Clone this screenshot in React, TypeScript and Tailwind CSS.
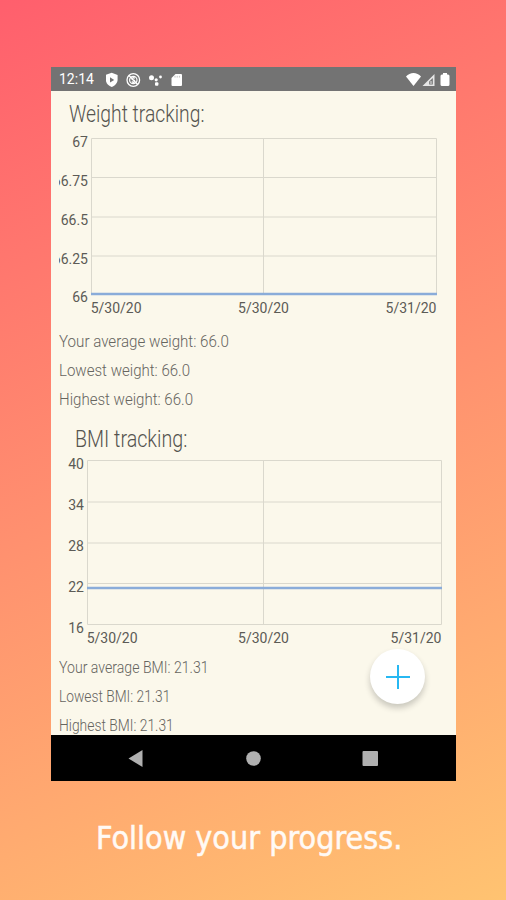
type ChartProps = {
  left: number
  right: number
  rows: number[]
  labels: string[]
  value: number
  height: number
}

// the svg edge cuts off labels that are too wide for the axis
function Chart({ left, right, rows, labels, value, height }: ChartProps) {
  const top = rows[0]
  const bottom = rows[rows.length - 1]
  const dateY = bottom + 18.5

  return (
    <svg width="390" height={height} className="ml-2 block overflow-hidden font-['Roboto',sans-serif]">
      <g stroke="#dad8cd" strokeWidth="1">
        {rows.map((y) => (
          <line key={y} x1={left} x2={right} y1={y} y2={y} />
        ))}
        {[left, 204.5, right].map((x) => (
          <line key={x} x1={x} x2={x} y1={top} y2={bottom} />
        ))}
      </g>
      <line x1={left - 0.5} x2={right + 0.5} y1={value} y2={value} stroke="#8aacd9" strokeWidth="2.6" />
      <g fill="#5c5b56" fontSize="14">
        {labels.map((label, i) => (
          <text key={label} x={left - 3.5} y={rows[i] + 8} textAnchor="end">{label}</text>
        ))}
        <text x={left - 0.8} y={dateY}>5/30/20</text>
        <text x="204.5" y={dateY} textAnchor="middle">5/30/20</text>
        <text x={right} y={dateY} textAnchor="end">5/31/20</text>
      </g>
    </svg>
  )
}

function Stat({ className, children }: { className: string; children: string }) {
  return (
    <p className="flex h-[29px] items-center pl-2 text-[17px] font-light text-[#66655f]">
      <span className={`origin-left whitespace-nowrap ${className}`}>{children}</span>
    </p>
  )
}

function StatusBar() {
  return (
    <div className="flex h-6 items-center justify-between bg-[#737373] pl-2 pr-[6px] pt-px text-white">
      <div className="flex items-center">
        <span className="w-[47px] text-[14px]">12:14</span>
        <svg width="84" height="16" viewBox="0 0 84 16" fill="currentColor">
          <path d="M5.7 .8 11.600 2.900v4.600c0 3.600-2.500 6.200-5.900 7.400C2.300 13.700-.2 11.100-.2 7.500V2.900z" />
          <path d="M4 5.300 8.200 7.900 4 10.500z" fill="#737373" />
          <g fill="none" stroke="currentColor">
            <circle cx="27.300" cy="8" r="6.300" strokeWidth="1.300" />
            <circle cx="27.300" cy="8" r="3.700" strokeWidth="1.200" />
            <path d="M23 3.500 31.700 12.500M25.800 9.500c1 1.300 3 .8 3-.3 0-1.600-3-.8-3-2.400 0-1.200 2-1.400 3-.4" strokeWidth="1.300" />
          </g>
          <circle cx="45.500" cy="5.700" r="2.500" />
          <circle cx="50.200" cy="7.800" r="1.600" />
          <circle cx="54.500" cy="5" r="1.400" />
          <rect x="49" y="10.300" width="3.400" height="3.400" rx="1" />
          <path d="M69.500 2H75q1 0 1 1v10q0 1-1 1h-8.500q-1 0-1-1V6z" />
          <path d="M69 3.800v1.800M71.200 3.800v1.800M73.400 3.800v1.800" stroke="#b5b5b5" strokeWidth=".8" />
        </svg>
      </div>
      <svg width="44" height="16" viewBox="0 0 44 16" fill="currentColor">
        <path d="M0 4.500C4-.2 11-.2 15 4.500L7.500 14z" />
        <path d="M28.500 2v12H16.500z" fill="#e6e6e6" />
        <path d="M26.800 6v6.400h-3.600v-3z" fill="#737373" />
        <path d="M25 9v3" stroke="#d5d5d5" strokeWidth="1.200" />
        <path d="M37 2.500V1h4v1.500h1q1.500 0 1.500 1.500v8.500q0 1.500-1.500 1.500h-6q-1.500 0-1.500-1.500V4q0-1.500 1.500-1.500z" />
      </svg>
    </div>
  )
}

function NavBar() {
  return (
    <div className="h-[46px] bg-black">
      <svg width="405" height="46" fill="#b0b0b0">
        <path d="M77.500 23.500 91.500 15v17z" />
        <circle cx="202.500" cy="23.500" r="7.300" />
        <rect x="311.500" y="16" width="15.500" height="15" rx="1" />
      </svg>
    </div>
  )
}

export default function App() {
  return (
    <div className="flex h-[900px] w-[506px] flex-col items-start overflow-hidden bg-[linear-gradient(157deg,#ff5f6d,#ffc371)] pl-[51px] pt-[67px] font-['Roboto',sans-serif]">
      <div className="relative w-[405px]">
        <StatusBar />
        <div className="h-[644px] overflow-hidden bg-[#fbf8eb]">
          <h2 className="flex h-[41px] items-center pl-[18px] pt-[7px] text-[23px] font-light text-[#55544f]">
            <span className="origin-left scale-x-[0.84] whitespace-nowrap">Weight tracking:</span>
          </h2>
          <Chart
            left={32.5}
            right={377.5}
            rows={[6.5, 45.5, 85, 124, 162]}
            labels={['67', '66.75', '66.5', '66.25', '66']}
            value={162}
            height={195}
          />
          <Stat className="scale-x-[0.89]">Your average weight: 66.0</Stat>
          <Stat className="scale-x-[0.885]">Lowest weight: 66.0</Stat>
          <Stat className="scale-x-[0.885]">Highest weight: 66.0</Stat>
          <h2 className="flex h-[39px] items-center pl-6 pt-[13px] text-[23px] font-light text-[#55544f]">
            <span className="origin-left scale-x-[0.855] whitespace-nowrap">BMI tracking:</span>
          </h2>
          <Chart
            left={28.5}
            right={382.5}
            rows={[7.5, 49, 90, 130.5, 171.5]}
            labels={['40', '34', '28', '22', '16']}
            value={135}
            height={200}
          />
          <Stat className="scale-x-[0.83]">Your average BMI: 21.31</Stat>
          <Stat className="scale-x-[0.81]">Lowest BMI: 21.31</Stat>
          <Stat className="scale-x-[0.815]">Highest BMI: 21.31</Stat>
        </div>
        <NavBar />
        <button
          aria-label="Add"
          className="absolute bottom-[77px] right-[31px] flex size-[55px] items-center justify-center rounded-full bg-white shadow-[0_4px_6px_rgba(0,0,0,0.2)]"
        >
          <svg width="24" height="24" stroke="#27b8f2" strokeWidth="2">
            <path d="M12 0v24M0 12h24" />
          </svg>
        </button>
      </div>
      <p className="ml-[45px] mt-[37px] whitespace-nowrap font-['DejaVu_Sans_Condensed','DejaVu_Sans',sans-serif] text-[32px] leading-10 text-[#fffaf5] [-webkit-text-stroke:0.5px_#fffaf5]">
        Follow your progress.
      </p>
    </div>
  )
}
